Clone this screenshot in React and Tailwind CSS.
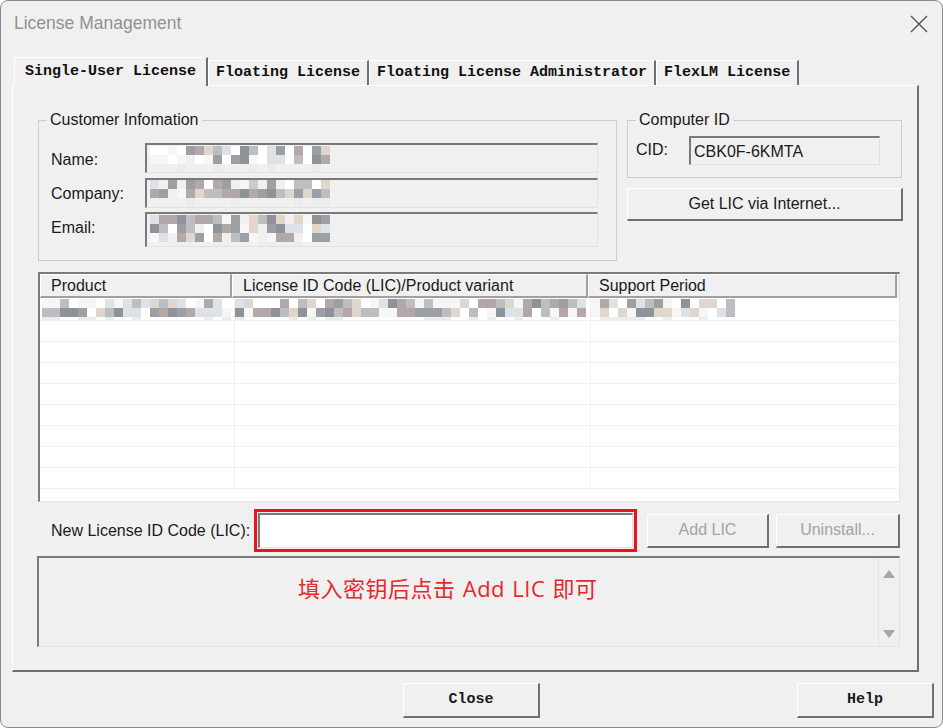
import React from "react"

const UI = "font-['Liberation_Sans',Arial,sans-serif]"
const MONO = "font-['Liberation_Mono','Courier_New',monospace]"

// blurred-out personal data, drawn as mosaic tiles
const TONES = [
  "bg-transparent",
  "bg-transparent",
  "bg-[#f6f6f6]",
  "bg-[#e8e8ea]",
  "bg-[#dde2e8]",
  "bg-[#cbcbcd]",
  "bg-[#bcbec2]",
  "bg-[#aaabb0]",
  "bg-[#9ca0a5]",
  "bg-[#c9c1b9]",
  "bg-[#e0d6cc]",
  "bg-[#bcc4d6]",
  "bg-[#8e9399]",
  "bg-[#7b7f85]",
  "bg-[#ffffff]",
  "bg-[#e4eef5]",
  "bg-[#b3a8a7]",
  "bg-[#a5adb3]",
]

function Mosaic({ cols, rows, seed, width, fadeLast }) {
  let s = seed
  const next = () => {
    s = (s * 1103515245 + 12345) % 2147483648
    return s
  }
  const cells = []
  for (let r = 0; r < rows; r++) {
    for (let c = 0; c < cols; c++) {
      let tone = TONES[next() % TONES.length]
      if (fadeLast && r === rows - 1) tone = next() % 3 === 0 ? "bg-[#ececec]" : "bg-transparent"
      cells.push(<div key={r + "-" + c} className={`w-[9px] h-[9px] ${tone}`} />)
    }
  }
  return <div className={`flex flex-wrap ${width}`}>{cells}</div>
}

function Field({ height, children }) {
  return (
    <div
      className={`${height} w-[453px] border-t-2 border-l-2 border-t-[#7a7a7a] border-l-[#7a7a7a] border-r border-b border-r-[#e3e3e3] border-b-[#e3e3e3] bg-[#f0f0f0] overflow-hidden`}
    >
      {children}
    </div>
  )
}

function RaisedButton({ className, children, disabled, mono }) {
  return (
    <button
      className={`${className} flex items-center justify-center bg-[#f0f0f0] border-t border-l border-t-white border-l-white border-r-2 border-b-2 border-r-[#6f6f6f] border-b-[#6f6f6f] ${
        mono ? `${MONO} text-[15px] font-bold` : `${UI} text-[16px]`
      } ${disabled ? "text-[#a3a3a3]" : "text-[#1a1a1a]"}`}
    >
      {children}
    </button>
  )
}

function Tab({ label, active }) {
  return (
    <div
      className={`${MONO} font-bold text-[15px] text-[#111] flex items-center bg-[#f0f0f0] border-t border-l border-t-white border-l-white border-r-2 border-r-[#6f6f6f] ${
        active ? "h-[29px] px-[10px] relative z-10 -mb-[1px] pt-[1px]" : "h-[25px] px-[7px]"
      }`}
    >
      {label}
    </div>
  )
}

const rows = [0, 1, 2, 3, 4, 5, 6, 7, 8]

export default function App() {
  return (
    <div className={`w-[943px] h-[728px] bg-[#f0f0f0] border border-[#8c8c8c] rounded-[8px] overflow-hidden ${UI}`}>
      {/* title bar */}
      <div className="h-[45px] flex items-center justify-between pl-[13px] pr-[14px]">
        <span className="text-[17.5px] text-[#929292]">License Management</span>
        <svg width="18" height="18" viewBox="0 0 18 18" className="mt-[1px]">
          <path d="M1 1 L17 17 M17 1 L1 17" stroke="#4a4a4a" strokeWidth="1.2" />
        </svg>
      </div>

      {/* tabs */}
      <div className="mt-[11px] pl-[13px] flex items-end">
        <Tab label="Single-User License" active />
        <Tab label="Floating License" />
        <Tab label="Floating License Administrator" />
        <Tab label="FlexLM License" />
      </div>

      {/* tab page */}
      <div className="ml-[11px] w-[907px] h-[587px] border-t border-l border-white border-r-2 border-b-2 border-r-[#6f6f6f] border-b-[#6f6f6f] pl-[25px] pt-[25px]">
        <div className="flex gap-[10px]">
          <fieldset className="w-[579px] h-[150px] border border-[#cdcdcd] pl-[12px] pt-[14px]">
            <legend className="-ml-[4px] px-[3px] text-[16px] leading-[18px] text-[#1a1a1a]">Customer Infomation</legend>
            <div className="flex flex-col text-[16px] text-[#1a1a1a]">
              <div className="flex items-center">
                <span className="w-[94px] pt-[4px]">Name:</span>
                <Field height="h-[30px]">
                  <div className="pl-[3px] pt-[1px]">
                    <Mosaic cols={20} rows={3} seed={11} width="w-[180px]" fadeLast />
                  </div>
                </Field>
              </div>
              <div className="flex items-center mt-[5px]">
                <span className="w-[94px] pt-[2px]">Company:</span>
                <Field height="h-[30px]">
                  <div className="pl-[3px]">
                    <Mosaic cols={20} rows={3} seed={37} width="w-[180px]" fadeLast />
                  </div>
                </Field>
              </div>
              <div className="flex items-center mt-[4px]">
                <span className="w-[94px] -mt-[4px]">Email:</span>
                <Field height="h-[35px]">
                  <div className="pl-[3px] pt-[1px]">
                    <Mosaic cols={20} rows={4} seed={73} width="w-[180px]" fadeLast />
                  </div>
                </Field>
              </div>
            </div>
          </fieldset>

          <div className="w-[276px] flex flex-col">
            <fieldset className="w-[275px] h-[67px] border border-[#cdcdcd] pl-[8px] pt-[7px] flex">
              <legend className="ml-0 px-[3px] text-[16px] leading-[18px] text-[#1a1a1a]">Computer ID</legend>
              <div className="flex items-center text-[16px] text-[#1a1a1a]">
                <span className="w-[53px] -mt-[2px]">CID:</span>
                <div className="w-[191px] h-[29px] flex items-center pl-[3px] pt-[2px] border-t-2 border-l-2 border-t-[#7a7a7a] border-l-[#7a7a7a] border-r border-b border-r-[#e3e3e3] border-b-[#e3e3e3]">
                  CBK0F-6KMTA
                </div>
              </div>
            </fieldset>
            <RaisedButton className="mt-[10px] w-[276px] h-[33px]">Get LIC via Internet...</RaisedButton>
          </div>
        </div>

        {/* license list */}
        <div className="mt-[11px] w-[862px] h-[230px] bg-white border-t-2 border-l-2 border-t-[#7a7a7a] border-l-[#7a7a7a] border-r border-b border-r-[#e3e3e3] border-b-[#e3e3e3] overflow-hidden text-[16px] text-[#1a1a1a]">
          <div className="flex h-[24px] bg-[#f0f0f0]">
            <div className="w-[192px] pl-[10px] flex items-center border-t border-l border-white border-r-2 border-b-2 border-r-[#a0a0a0] border-b-[#a0a0a0]">Product</div>
            <div className="w-[356px] pl-[10px] flex items-center border-t border-l border-white border-r-2 border-b-2 border-r-[#a0a0a0] border-b-[#a0a0a0]">
              License ID Code (LIC)/Product variant
            </div>
            <div className="w-[309px] pl-[10px] flex items-center border-t border-l border-white border-r-2 border-b-2 border-r-[#a0a0a0] border-b-[#a0a0a0]">
              Support Period
            </div>
          </div>
          <div className="flex flex-col w-[857px]">
            {rows.map((i) => (
              <div key={i} className={`flex border-b border-[#f0f0f0] ${i === 0 ? "h-[23px]" : "h-[21px]"}`}>
                <div className="w-[195px] border-r border-[#f0f0f0] overflow-hidden">
                  {i === 0 && (
                    <div className="pl-[2px] pt-[1px]">
                      <Mosaic cols={21} rows={3} seed={5} width="w-[189px]" fadeLast />
                    </div>
                  )}
                </div>
                <div className="w-[356px] border-r border-[#f0f0f0] overflow-hidden">
                  {i === 0 && (
                    <div className="pt-[1px]">
                      <Mosaic cols={39} rows={3} seed={91} width="w-[351px]" fadeLast />
                    </div>
                  )}
                </div>
                <div className="flex-1 overflow-hidden">
                  {i === 0 && (
                    <div className="pt-[1px]">
                      <Mosaic cols={16} rows={3} seed={23} width="w-[144px]" fadeLast />
                    </div>
                  )}
                </div>
              </div>
            ))}
          </div>
        </div>

        {/* new LIC row */}
        <div className="mt-[7px] flex items-center">
          <span className="ml-[13px] w-[203px] text-[16px] text-[#1a1a1a]">New License ID Code (LIC):</span>
          <div className="w-[383px] h-[43px] border-[3px] border-[#e8141e] p-[1px]">
            <div className="w-full h-full bg-white border-t-2 border-l-2 border-t-[#7a7a7a] border-l-[#7a7a7a] border-r border-b border-r-[#e3e3e3] border-b-[#e3e3e3]" />
          </div>
          <RaisedButton className="ml-[10px] w-[122px] h-[34px]" disabled>Add LIC</RaisedButton>
          <RaisedButton className="ml-[7px] w-[124px] h-[34px]" disabled>Uninstall...</RaisedButton>
        </div>

        {/* message area */}
        <div className="mt-[4px] -ml-[1px] w-[863px] h-[91px] flex border-t-2 border-l-2 border-t-[#7a7a7a] border-l-[#7a7a7a] border-r border-b border-r-[#e3e3e3] border-b-[#e3e3e3]">
          <div className="flex-1 pl-[259px] pt-[16px]">
            <span className="text-[22px] leading-[28px] tracking-[0.5px] [word-spacing:1px] text-[#e8262d] font-['Open_Sans','Noto_Sans_CJK_SC',sans-serif]">
              填入密钥后点击 Add LIC 即可
            </span>
          </div>
          <div className="w-[21px] border-l border-[#e3e3e3] flex flex-col items-center justify-between pt-[12px] pb-[8px]">
            <svg width="12" height="8" viewBox="0 0 12 8">
              <polygon points="6,0 12,8 0,8" fill="#a6a6a6" />
            </svg>
            <svg width="12" height="8" viewBox="0 0 12 8">
              <polygon points="0,0 12,0 6,8" fill="#a6a6a6" />
            </svg>
          </div>
        </div>
      </div>

      {/* dialog buttons */}
      <div className="mt-[11px] flex">
        <RaisedButton className="ml-[402px] w-[137px] h-[35px]" mono>Close</RaisedButton>
        <RaisedButton className="ml-[257px] w-[137px] h-[35px]" mono>Help</RaisedButton>
      </div>
    </div>
  )
}
